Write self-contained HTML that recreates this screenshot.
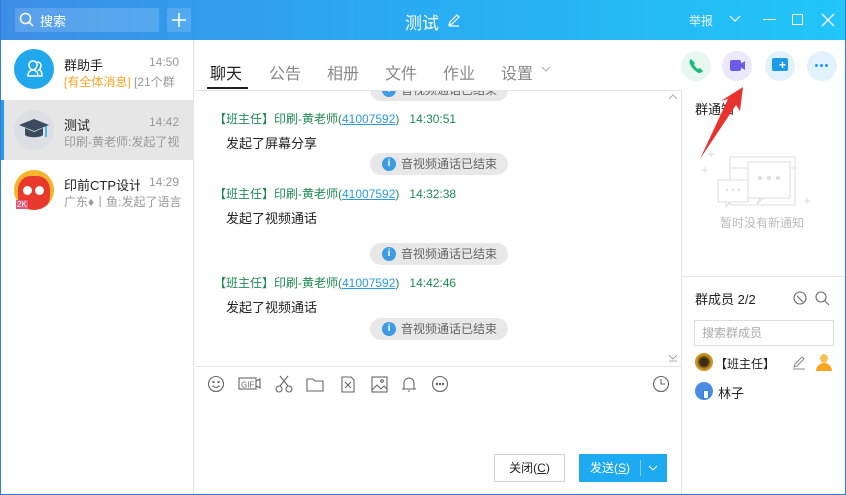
<!DOCTYPE html>
<html><head><meta charset="utf-8"><style>
*{margin:0;padding:0;box-sizing:border-box}
body{width:846px;height:495px;overflow:hidden;font-family:"Liberation Sans","Noto Sans CJK SC",sans-serif;background:#fff;position:relative;font-size:12px;color:#333}
.a{position:absolute;white-space:nowrap}
.hdr{left:0;top:0;width:846px;height:40px;background:linear-gradient(90deg,#3d8de6,#2aa9f2 45%,#22c6f8)}
.pill{position:absolute;left:370px;width:138px;height:22px;border-radius:11px;background:#e8e8e8;color:#666;font-size:12px;line-height:22px;padding-left:31px}
.pill i{position:absolute;left:12px;top:4px;width:14px;height:14px;border-radius:50%;background:#3d9be3;color:#fff;font-style:normal;font-size:10px;line-height:14px;text-align:center;font-weight:bold}
.snd{font-size:12px;color:#1f8a52}
.snd u{color:#2b9be0}
.msg{font-size:13px;color:#222}
</style></head><body>
<div class="a hdr"></div>
<div class="a" style="left:15px;top:8px;width:144px;height:24px;background:rgba(255,255,255,.16);border-radius:2px"></div>
<svg class="a" style="left:19px;top:12px" width="16" height="16"><circle cx="6.5" cy="6.5" r="5" fill="none" stroke="#fff" stroke-width="1.5"/><path d="M10 10l4 4" stroke="#fff" stroke-width="1.5"/></svg>
<div class="a" style="left:40px;top:11px;color:#fff;font-size:13px">搜索</div>
<div class="a" style="left:167px;top:8px;width:24px;height:24px;background:rgba(255,255,255,.16);border-radius:2px"></div>
<svg class="a" style="left:171px;top:12px" width="16" height="16"><path d="M8 1v14M1 8h14" stroke="#fff" stroke-width="1.5"/></svg>
<div class="a" style="left:405px;top:9px;color:#fff;font-size:17px">测试</div>
<svg class="a" style="left:447px;top:13px" width="14" height="14"><path d="M2 12l1-3 7-7 2 2-7 7zM2 13h10" stroke="#fff" fill="none" stroke-width="1.2"/></svg>
<div class="a" style="left:689px;top:12px;color:#e8f4ff;font-size:12px">举报</div>
<svg class="a" style="left:729px;top:15px" width="12" height="8"><path d="M1 1l5 5 5-5" stroke="#fff" fill="none" stroke-width="1.2"/></svg>
<div class="a" style="left:763px;top:19px;width:13px;height:1px;background:#fff"></div>
<div class="a" style="left:792px;top:14px;width:11px;height:11px;border:1.3px solid #fff"></div>
<svg class="a" style="left:821px;top:13px" width="14" height="14"><path d="M1 1l12 12M13 1L1 13" stroke="#fff" stroke-width="1.3"/></svg>

<!-- sidebar -->
<div class="a" style="left:0;top:40px;width:194px;height:455px;background:#fff;border-right:1px solid #e2e2e2"></div>
<div class="a" style="left:0;top:100px;width:194px;height:60px;background:#e6e6e6"></div>
<div class="a" style="left:0;top:100px;width:4px;height:60px;background:#2a9ae6"></div>
<div class="a" style="left:14px;top:49px;width:40px;height:40px;border-radius:50%;background:#21a8ec"></div>
<svg class="a" style="left:22px;top:57px" width="24" height="24"><path d="M6 19c0-4 2-6 5-6-3-1-4-3-4-5 0-3 2-4 4-4s4 1 4 4c0 2-1 4-4 5 3 0 5 2 5 6z M15 5c2 0 4 1 4 4 0 2-1 3-2 4 2 0 3 2 3 6h-3" stroke="#fff" stroke-width="1.5" fill="none"/></svg>
<div class="a" style="left:64px;top:55px;font-size:13px;color:#222">群助手</div>
<div class="a" style="left:149px;top:55px;font-size:12px;color:#999">14:50</div>
<div class="a" style="left:64px;top:73px;font-size:12px;color:#f5a623">[有全体消息] <span style="color:#999">[21个群</span></div>
<div class="a" style="left:14px;top:110px;width:40px;height:40px;border-radius:50%;background:#dcdfe3"></div>
<svg class="a" style="left:17px;top:116px" width="34" height="28"><path d="M2 9l15-6 15 6-15 6z" fill="#3b4a5c"/><path d="M8 12v7c3 3 15 3 18 0v-7l-9 4z" fill="#3b4a5c"/><path d="M29 10v11" stroke="#58b5e8" stroke-width="2"/></svg>
<div class="a" style="left:64px;top:115px;font-size:13px;color:#222">测试</div>
<div class="a" style="left:149px;top:115px;font-size:12px;color:#999">14:42</div>
<div class="a" style="left:64px;top:133px;font-size:12px;color:#999">印刷-黄老师:发起了视</div>
<div class="a" style="left:14px;top:170px;width:40px;height:40px;border-radius:50%;background:#f5b42a;overflow:hidden"><div style="position:absolute;left:4px;top:6px;width:32px;height:34px;border-radius:40%;background:#e8392c"></div><div style="position:absolute;left:9px;top:16px;width:9px;height:9px;border-radius:50%;background:#fff"></div><div style="position:absolute;left:21px;top:16px;width:9px;height:9px;border-radius:50%;background:#fff"></div></div>
<div class="a" style="left:16px;top:200px;font-size:8px;color:#fff;background:#e65a7a;padding:0 1px">2K</div>
<div class="a" style="left:64px;top:175px;font-size:13px;color:#222">印前CTP设计</div>
<div class="a" style="left:140px;top:172px;width:53px;height:18px;background:#fff"></div>
<div class="a" style="left:149px;top:175px;font-size:12px;color:#999">14:29</div>
<div class="a" style="left:64px;top:193px;font-size:12px;color:#999">广东♦丨鱼:发起了语言</div>

<!-- top clipped pill -->
<div class="a" style="left:195px;top:91px;width:486px;height:12px;overflow:hidden">
<div class="pill" style="left:175px;top:-12px"><i>i</i>音视频通话已结束</div></div>

<!-- tabs -->
<div class="a" style="left:195px;top:90px;width:486px;height:1px;background:#e5e5e5"></div>
<div class="a" style="left:210px;top:60px;font-size:16px;color:#222">聊天</div>
<div class="a" style="left:207px;top:87px;width:41px;height:2px;background:#222"></div>
<div class="a" style="left:269px;top:60px;font-size:16px;color:#888">公告</div>
<div class="a" style="left:327px;top:60px;font-size:16px;color:#888">相册</div>
<div class="a" style="left:385px;top:60px;font-size:16px;color:#888">文件</div>
<div class="a" style="left:443px;top:60px;font-size:16px;color:#888">作业</div>
<div class="a" style="left:501px;top:60px;font-size:16px;color:#888">设置</div>
<svg class="a" style="left:541px;top:66px" width="10" height="6"><path d="M1 1l4 4 4-4" stroke="#aaa" fill="none"/></svg>
<div class="a" style="left:681px;top:51px;width:30px;height:30px;border-radius:50%;background:#e6f8f0"></div>
<svg class="a" style="left:688px;top:58px" width="16" height="16"><path d="M3 1c-2 1-2 4 0 7s5 6 8 7c2 0 3-1 4-2l-3-3-2 1c-2-1-3-3-4-4l1-2-3-3z" fill="#1dbb7a"/></svg>
<div class="a" style="left:722px;top:51px;width:30px;height:30px;border-radius:50%;background:#ece8fb"></div>
<div class="a" style="left:730px;top:60px;width:11px;height:11px;border-radius:2px;background:#6a5ce8"></div>
<svg class="a" style="left:740px;top:61px" width="6" height="9"><path d="M0 3l5-3v9l-5-3z" fill="#6a5ce8"/></svg>
<div class="a" style="left:765px;top:51px;width:30px;height:30px;border-radius:50%;background:#e2f2fc"></div>
<div class="a" style="left:772px;top:58px;width:16px;height:13px;border-radius:2px;background:#1e9be6"></div>
<div class="a" style="left:779px;top:60px;color:#fff;font-size:12px;line-height:10px;font-weight:bold">+</div>
<div class="a" style="left:807px;top:51px;width:30px;height:30px;border-radius:50%;background:#e2f2fc"></div>
<div class="a" style="left:815px;top:64px;width:3px;height:3px;border-radius:50%;background:#1e9be6;box-shadow:5px 0 #1e9be6,10px 0 #1e9be6"></div>

<!-- messages -->
<svg class="a" style="left:668px;top:94px" width="10" height="6"><path d="M1 5l4-4 4 4" stroke="#aaa" fill="none"/></svg>
<div class="a snd" style="left:214px;top:110px">【班主任】印刷-黄老师(<u>41007592</u>)&nbsp;&nbsp; 14:30:51</div>
<div class="a msg" style="left:226px;top:133px">发起了屏幕分享</div>
<div class="pill" style="top:153px"><i>i</i>音视频通话已结束</div>
<div class="a snd" style="left:214px;top:185px">【班主任】印刷-黄老师(<u>41007592</u>)&nbsp;&nbsp; 14:32:38</div>
<div class="a msg" style="left:226px;top:208px">发起了视频通话</div>
<div class="pill" style="top:243px"><i>i</i>音视频通话已结束</div>
<div class="a snd" style="left:214px;top:274px">【班主任】印刷-黄老师(<u>41007592</u>)&nbsp;&nbsp; 14:42:46</div>
<div class="a msg" style="left:226px;top:297px">发起了视频通话</div>
<div class="pill" style="top:318px"><i>i</i>音视频通话已结束</div>
<svg class="a" style="left:668px;top:354px" width="10" height="8"><path d="M1 1l4 4 4-4M1 7h8" stroke="#aaa" fill="none"/></svg>
<div class="a" style="left:195px;top:366px;width:486px;height:1px;background:#e5e5e5"></div>

<!-- toolbar -->
<svg class="a" style="left:205px;top:374px" width="480" height="20" fill="none" stroke="#666" stroke-width="1.1">
<circle cx="11" cy="10" r="7.5"/><path d="M7.5 11.5c2 2.5 5 2.5 7 0"/><circle cx="8.5" cy="8" r=".6"/><circle cx="13.5" cy="8" r=".6"/>
<rect x="34" y="4" width="17" height="11"/><text x="36" y="13.5" font-size="8" fill="#666" stroke="none" font-family="Liberation Sans">GIF</text><path d="M51 7l4-2v9l-4-2"/>
<circle cx="74" cy="15" r="3"/><circle cx="84" cy="15" r="3"/><path d="M75 12l8-10M83 12l-8-10"/>
<path d="M102 5h6l2 2h8v10h-16z"/>
<path d="M137 3h9l3 3v12h-12z M140 8l6 6M146 8l-6 6"/>
<rect x="167" y="3" width="15" height="15"/><path d="M167 16l5-5 4 4 3-3 3 3"/><circle cx="177" cy="7" r="1.3"/>
<path d="M199 15v-6a5 5 0 0 1 10 0v6h2h-14M203 17h2"/>
<circle cx="235" cy="10" r="7.5"/><circle cx="232" cy="10" r=".7"/><circle cx="235" cy="10" r=".7"/><circle cx="238" cy="10" r=".7"/>
<circle cx="456" cy="10" r="7.5"/><path d="M456 5v5h4"/>
</svg>

<!-- buttons -->
<div class="a" style="left:494px;top:454px;width:71px;height:28px;border:1px solid #d3d3d3;background:#fff;font-size:12px;text-align:center;line-height:26px;color:#222">关闭(<u>C</u>)</div>
<div class="a" style="left:579px;top:454px;width:88px;height:28px;background:#1eaaf1;color:#fff;font-size:12px;line-height:28px;padding-left:11px">发送(<u>S</u>)</div>
<div class="a" style="left:640px;top:460px;width:1px;height:16px;background:#7fd0f8"></div>
<svg class="a" style="left:648px;top:465px" width="10" height="6"><path d="M1 1l4 4 4-4" stroke="#fff" fill="none"/></svg>

<!-- right panel -->
<div class="a" style="left:681px;top:90px;width:1px;height:405px;background:#e5e5e5"></div>
<div class="a" style="left:682px;top:276px;width:164px;height:1px;background:#e5e5e5"></div>
<div class="a" style="left:695px;top:99px;font-size:13px;color:#222">群通知</div>
<svg class="a" style="left:700px;top:140px" width="115" height="70" fill="none" stroke="#ddd" stroke-width="1">
<path d="M8 14h6M11 11v6M2 30h6M5 27v6M104 61h6M107 58v6"/>
<rect x="30" y="17" width="65" height="48"/><path d="M30 28h65"/>
<rect x="18" y="40" width="30" height="22" fill="#fff"/><path d="M26 62v5l4-5"/>
<rect x="48" y="22" width="42" height="36" fill="#fff"/><path d="M60 58l-3 6 6-6"/>
<g fill="#ddd" stroke="none"><circle cx="27" cy="50" r="1.3"/><circle cx="33" cy="50" r="1.3"/><circle cx="39" cy="50" r="1.3"/><circle cx="60" cy="38" r="2"/><circle cx="69" cy="38" r="2"/><circle cx="78" cy="38" r="2"/></g></svg>
<div class="a" style="left:720px;top:214px;font-size:12px;color:#bbb">暂时没有新通知</div>
<svg class="a" style="left:698px;top:85px" width="50" height="76"><path d="M2 74L30 14l-7 2 22-14-3 24-4-6z" fill="#e8322e"/></svg>
<div class="a" style="left:695px;top:289px;font-size:13px;color:#222">群成员 2/2</div>
<svg class="a" style="left:792px;top:290px" width="40" height="16" fill="none" stroke="#666" stroke-width="1.1"><circle cx="8" cy="8" r="6"/><path d="M5 6l6 6"/><circle cx="29" cy="7" r="5"/><path d="M33 11l4 4"/></svg>
<div class="a" style="left:694px;top:320px;width:140px;height:26px;border:1px solid #ddd;font-size:12px;color:#aaa;line-height:24px;padding-left:7px">搜索群成员</div>
<div class="a" style="left:695px;top:353px;width:18px;height:18px;border-radius:50%;background:radial-gradient(#3a2a10 30%,#d8a020 60%,#6a4a10)"></div>
<div class="a" style="left:715px;top:355px;font-size:12px;color:#222">【班主任】</div>
<svg class="a" style="left:791px;top:354px" width="16" height="16"><path d="M3 13l1-3 7-7 2 2-7 7z M2 15h12" stroke="#888" fill="none"/></svg>
<div class="a" style="left:815px;top:353px;width:18px;height:18px"><div style="position:absolute;left:5px;top:1px;width:8px;height:9px;border-radius:50%;background:#f5c25a"></div><div style="position:absolute;left:1px;top:10px;width:16px;height:8px;border-radius:8px 8px 0 0;background:#f5a623"></div></div>
<div class="a" style="left:695px;top:382px;width:18px;height:18px;border-radius:50%;background:#4a8ae0"></div>
<div class="a" style="left:703px;top:390px;width:6px;height:9px;background:#fff;border:1.5px solid #1e88e5;border-radius:1px"></div>
<div class="a" style="left:718px;top:383px;font-size:13px;color:#222">林子</div>

<!-- window border -->
<div class="a" style="left:0;top:0;width:846px;height:495px;border:1px solid #2f7fd6;border-top:none;pointer-events:none"></div>
</body></html>
